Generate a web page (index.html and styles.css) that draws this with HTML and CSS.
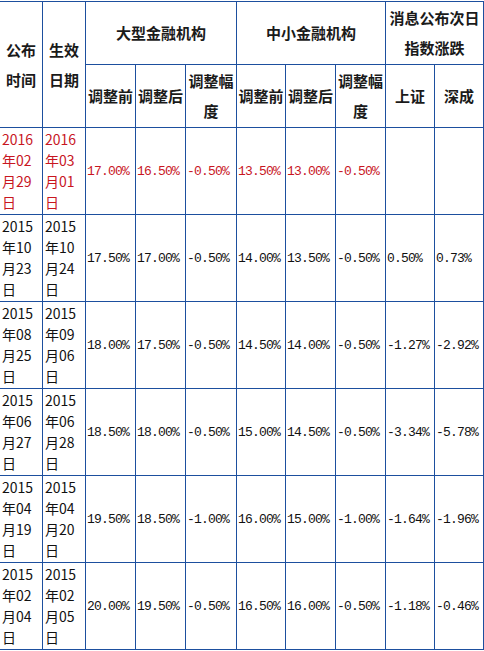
FILE: index.html
```html
<!DOCTYPE html>
<html lang="zh-CN">
<head>
<meta charset="utf-8">
<title>存款准备金率调整</title>
<link rel="stylesheet" href="styles.css">
</head>
<body>
<table class="rrr">
  <colgroup>
    <col class="c-date"><col class="c-date">
    <col class="c-50"><col class="c-50"><col class="c-51">
    <col class="c-49"><col class="c-50"><col class="c-50">
    <col class="c-49"><col class="c-49">
  </colgroup>
  <thead>
    <tr class="hr">
      <th rowspan="2">公布时间</th>
      <th rowspan="2">生效日期</th>
      <th colspan="3">大型金融机构</th>
      <th colspan="3">中小金融机构</th>
      <th colspan="2">消息公布次日指数涨跌</th>
    </tr>
    <tr class="hr">
      <th>调整前</th><th>调整后</th><th>调整幅度</th>
      <th>调整前</th><th>调整后</th><th>调整幅度</th>
      <th>上证</th><th>深成</th>
    </tr>
  </thead>
  <tbody>
    <tr class="dr red">
      <td class="d">2016年02月29日</td><td class="d">2016年03月01日</td>
      <td class="n">17.00%</td><td class="n">16.50%</td><td class="n">-0.50%</td>
      <td class="n">13.50%</td><td class="n">13.00%</td><td class="n">-0.50%</td>
      <td class="n"></td><td class="n"></td>
    </tr>
    <tr class="dr">
      <td class="d">2015年10月23日</td><td class="d">2015年10月24日</td>
      <td class="n">17.50%</td><td class="n">17.00%</td><td class="n">-0.50%</td>
      <td class="n">14.00%</td><td class="n">13.50%</td><td class="n">-0.50%</td>
      <td class="n">0.50%</td><td class="n">0.73%</td>
    </tr>
    <tr class="dr">
      <td class="d">2015年08月25日</td><td class="d">2015年09月06日</td>
      <td class="n">18.00%</td><td class="n">17.50%</td><td class="n">-0.50%</td>
      <td class="n">14.50%</td><td class="n">14.00%</td><td class="n">-0.50%</td>
      <td class="n">-1.27%</td><td class="n">-2.92%</td>
    </tr>
    <tr class="dr">
      <td class="d">2015年06月27日</td><td class="d">2015年06月28日</td>
      <td class="n">18.50%</td><td class="n">18.00%</td><td class="n">-0.50%</td>
      <td class="n">15.00%</td><td class="n">14.50%</td><td class="n">-0.50%</td>
      <td class="n">-3.34%</td><td class="n">-5.78%</td>
    </tr>
    <tr class="dr">
      <td class="d">2015年04月19日</td><td class="d">2015年04月20日</td>
      <td class="n">19.50%</td><td class="n">18.50%</td><td class="n">-1.00%</td>
      <td class="n">16.00%</td><td class="n">15.00%</td><td class="n">-1.00%</td>
      <td class="n">-1.64%</td><td class="n">-1.96%</td>
    </tr>
    <tr class="dr">
      <td class="d">2015年02月04日</td><td class="d">2015年02月05日</td>
      <td class="n">20.00%</td><td class="n">19.50%</td><td class="n">-0.50%</td>
      <td class="n">16.50%</td><td class="n">16.00%</td><td class="n">-0.50%</td>
      <td class="n">-1.18%</td><td class="n">-0.46%</td>
    </tr>
  </tbody>
</table>
</body>
</html>
```
FILE: styles.css
```css
html, body {
  margin: 0;
  padding: 0;
  background: #ffffff;
}

body {
  font-family: "Noto Sans CJK SC", "Liberation Sans", sans-serif;
  color: #111111;
}

.rrr {
  border-collapse: collapse;
  table-layout: fixed;
  width: 485px;
  margin: 1px 0 0 -1px;
  border: 1px solid #1d4f9e;
}

.c-date { width: 43px; }
.c-50 { width: 50px; }
.c-51 { width: 51px; }
.c-49 { width: 49px; }

.rrr th,
.rrr td {
  border: 1px solid #1d4f9e;
  padding: 1px 1px;
  vertical-align: middle;
}

.rrr th {
  font-size: 15px;
  font-weight: 700;
  line-height: 30px;
  text-align: center;
  color: #1a1a1a;
}

.hr { height: 63px; }
.dr { height: 87px; }

.rrr td {
  text-align: left;
  color: #111111;
}

.rrr td.d {
  font-family: "Noto Sans CJK SC", "Liberation Sans", sans-serif;
  font-size: 14px;
  line-height: 21px;
  padding-left: 2px;
  word-break: normal;
}

.rrr td.n {
  font-family: "Liberation Mono", "DejaVu Sans Mono", monospace;
  font-size: 13px;
  line-height: 21px;
  letter-spacing: -0.8px;
  white-space: nowrap;
  padding-left: 1px;
}

.red td { color: #c8161f; }
```
